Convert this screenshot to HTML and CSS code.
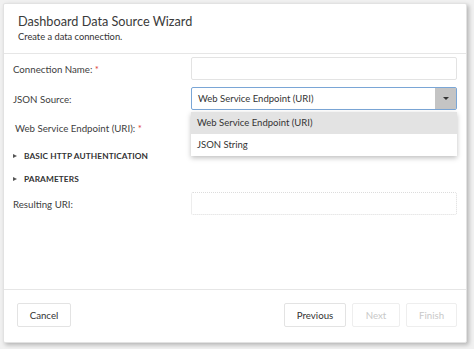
FILE: index.html
```html
<!DOCTYPE html>
<html lang="en">
<head>
    <meta charset="UTF-8">
    <meta name="viewport" content="width=device-width, initial-scale=1.0">
    <title>Dashboard Data Source Wizard</title>
    <link rel="stylesheet" href="styles.css">
</head>
<body>
    <div class="wizard">
        <div class="wizard-header">
            <h2 class="wizard-title">Dashboard Data Source Wizard</h2>
            <div class="wizard-subtitle">Create a data connection.</div>
        </div>
        <div class="wizard-body">
            <div class="field-row">
                <label class="field-label">Connection Name: <span class="req">*</span></label>
                <div class="field-input"></div>
            </div>
            <div class="field-row">
                <label class="field-label">JSON Source:</label>
                <div class="select-wrap">
                    <div class="field-input select-box">
                        <span>Web Service Endpoint (URI)</span>
                        <span class="select-btn"><span class="caret"></span></span>
                    </div>
                    <ul class="select-list">
                        <li class="selected">Web Service Endpoint (URI)</li>
                        <li>JSON String</li>
                    </ul>
                </div>
            </div>
            <div class="field-row row-endpoint">
                <label class="field-label indent">Web Service Endpoint (URI): <span class="req">*</span></label>
                <div class="field-input"></div>
            </div>
            <div class="group-title"><span class="arrow"></span>BASIC HTTP AUTHENTICATION</div>
            <div class="group-title"><span class="arrow"></span>PARAMETERS</div>
            <div class="field-row">
                <label class="field-label">Resulting URI:</label>
                <div class="field-input dotted"></div>
            </div>
        </div>
        <div class="wizard-footer">
            <button class="btn btn-cancel">Cancel</button>
            <div class="footer-right">
                <button class="btn btn-prev">Previous</button>
                <button class="btn btn-next" disabled>Next</button>
                <button class="btn btn-finish" disabled>Finish</button>
            </div>
        </div>
    </div>
</body>
</html>
```
FILE: styles.css
```css
html, body {
    margin: 0;
    height: 100%;
}
body {
    background-color: #f1f1f1;
    padding: 3px 7px 6px 3px;
    box-sizing: border-box;
    font-family: Lato, "Open Sans", sans-serif;
    color: #404040;
}
.wizard {
    height: 100%;
    background: #fff;
    border: 1px solid #e2e2e2;
    border-radius: 2px;
    box-shadow: 2px 2px 4px rgba(0, 0, 0, 0.25);
    display: flex;
    flex-direction: column;
    box-sizing: border-box;
}
.wizard-header {
    height: 50px;
    box-sizing: border-box;
    padding: 9px 14px 0;
    border-bottom: 1px solid #e6e6e6;
}
.wizard-title {
    margin: 0;
    font-size: 12.7px;
    font-weight: normal;
    line-height: 17px;
    color: #3a3a3a;
}
.wizard-subtitle {
    font-size: 9.3px;
    line-height: 14px;
    color: #333;
}
.wizard-body {
    flex: 1;
    padding: 3px 9px 0 9px;
    display: flex;
    flex-direction: column;
}
.field-row {
    display: flex;
    align-items: center;
    height: 23px;
    margin-bottom: 7px;
}
.field-row.row-endpoint {
    margin-top: -1px;
    margin-bottom: 5px;
}
.field-label {
    width: 178px;
    font-size: 9.7px;
    color: #404040;
}
.field-label.indent {
    padding-left: 2px;
}
.req {
    color: #e0443c;
}
.field-input {
    flex: 1;
    height: 23px;
    box-sizing: border-box;
    border: 1px solid #e3e3e3;
    border-radius: 2px;
}
.field-input.dotted {
    border: 1px dotted #dcdcdc;
}
.select-wrap {
    flex: 1;
    position: relative;
    display: flex;
}
.select-box {
    border-color: #7aa6d6;
    display: flex;
    align-items: center;
    justify-content: space-between;
    padding-left: 6px;
    font-size: 9.5px;
    color: #333;
}
.select-btn {
    width: 21px;
    height: 100%;
    background: #c4c4c4;
    display: flex;
    align-items: center;
    justify-content: center;
}
.caret {
    width: 0;
    height: 0;
    border-left: 3px solid transparent;
    border-right: 3px solid transparent;
    border-top: 3px solid #333;
}
.select-list {
    position: absolute;
    top: 25px;
    left: 0;
    right: 0;
    margin: 0;
    padding: 0;
    list-style: none;
    background: #fff;
    box-shadow: 0 2px 5px rgba(0, 0, 0, 0.25);
    z-index: 2;
}
.select-list li {
    height: 22px;
    line-height: 22px;
    padding-left: 6px;
    font-size: 9.5px;
    color: #333;
}
.select-list li.selected {
    background: #e3e3e3;
}
.group-title {
    height: 23px;
    display: flex;
    align-items: center;
    font-size: 8.3px;
    font-weight: bold;
    color: #333;
    letter-spacing: 0.1px;
}
.arrow {
    width: 0;
    height: 0;
    border-top: 2.5px solid transparent;
    border-bottom: 2.5px solid transparent;
    border-left: 4px solid #555;
    margin: 0 7px 0 0;
}
.group-title + .field-row {
    margin-top: 2px;
}
.wizard-footer {
    height: 53px;
    box-sizing: border-box;
    border-top: 1px solid #e6e6e6;
    padding: 13px 9px 0 13px;
    display: flex;
    justify-content: space-between;
    align-items: flex-start;
}
.footer-right {
    display: flex;
    gap: 6px;
}
.btn {
    height: 24px;
    padding: 0;
    background: #fff;
    border: 1px solid #e3e3e3;
    border-radius: 2px;
    font-family: Lato, "Open Sans", sans-serif;
    font-size: 9.7px;
    color: #333;
}
.btn-cancel {
    width: 54px;
}
.btn-prev {
    width: 62px;
}
.btn-next {
    width: 48px;
}
.btn-finish {
    width: 51px;
}
.btn:disabled {
    color: #c8c8c8;
    border-color: #eeeeee;
}
```
